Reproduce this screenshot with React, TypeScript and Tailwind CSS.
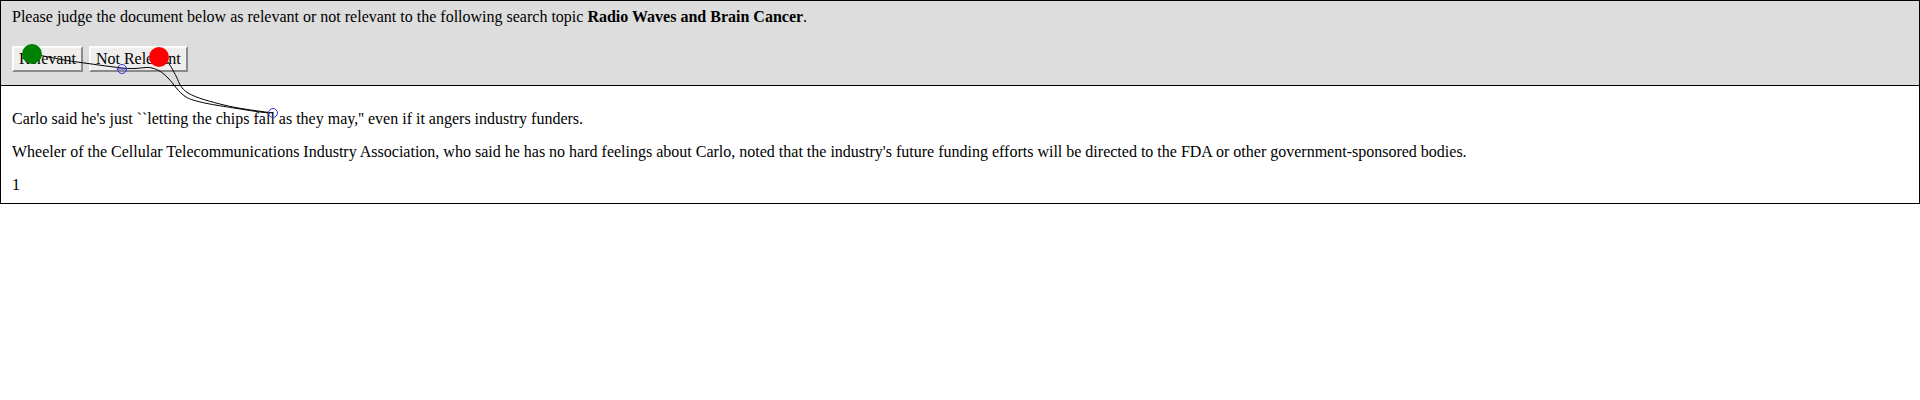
import React from "react";

// Mouse trace drawn over the page (recorded cursor path + click markers)
function CursorTrace() {
    return (
        <svg
            className="absolute left-0 top-0 pointer-events-none"
            width="400"
            height="140"
            viewBox="0 0 400 140"
        >
            <path
                d="M32 54 C 50 57, 62 60, 77 62 S 105 66, 122 68 S 145 66, 152 68 S 162 72, 168 78 S 178 92, 186 97 S 215 105, 234 108 S 258 112, 270 113"
                fill="none"
                stroke="#000"
                strokeWidth="1"
            />
            <path
                d="M168 62 C 172 68, 175 74, 177 78 S 180 88, 188 93 S 212 102, 224 105 S 250 110, 273 113"
                fill="none"
                stroke="#000"
                strokeWidth="1"
            />
            <circle cx="32" cy="54" r="10" fill="#008000" />
            <circle cx="159" cy="57" r="10" fill="#ff0000" />
            <circle cx="122" cy="69" r="4.5" fill="none" stroke="#3333dd" strokeWidth="1" />
            <line x1="117.5" y1="69" x2="126.5" y2="69" stroke="#3333dd" strokeWidth="1" />
            <circle cx="273" cy="113" r="4.5" fill="none" stroke="#3333dd" strokeWidth="1" />
        </svg>
    );
}

function JudgeButton({ label }: { label: string }) {
    return (
        <button className="h-[26px] px-[5px] bg-[#efeeec] text-black text-[16px] leading-[18px] border-2 border-t-[#fbfbfb] border-l-[#fbfbfb] border-b-[#8a8a8a] border-r-[#8a8a8a]">
            {label}
        </button>
    );
}

export default function App() {
    return (
        <div className="relative w-full min-h-[400px] bg-white text-black text-[16px] leading-[18px] font-['Liberation_Serif',serif]">
            <div className="h-[86px] bg-[#dddddd] border border-black px-[11px] pt-[7px]">
                <div>
                    Please judge the document below as relevant or not relevant to the following search topic{" "}
                    <b>Radio Waves and Brain Cancer</b>.
                </div>
                <div className="flex gap-[6px] mt-[20px]">
                    <JudgeButton label="Relevant" />
                    <JudgeButton label="Not Relevant" />
                </div>
            </div>

            <div className="border border-t-0 border-black px-[11px] pt-[24px] pb-[9px] flex flex-col gap-[15px]">
                <p>Carlo said he's just ``letting the chips fall as they may,'' even if it angers industry funders.</p>
                <p>
                    Wheeler of the Cellular Telecommunications Industry Association, who said he has no hard feelings about
                    Carlo, noted that the industry's future funding efforts will be directed to the FDA or other
                    government-sponsored bodies.
                </p>
                <p>1</p>
            </div>

            <CursorTrace />
        </div>
    );
}
